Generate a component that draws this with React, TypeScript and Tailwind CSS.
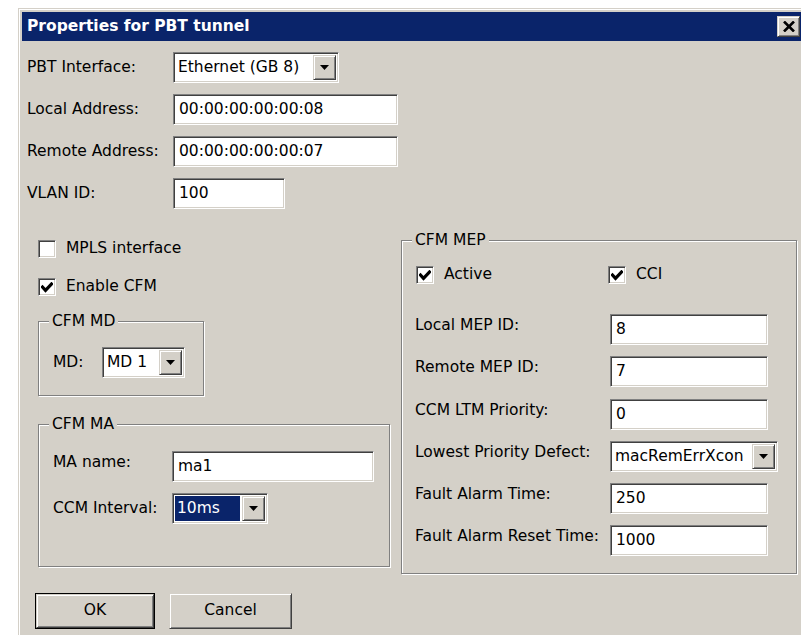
import type { ReactNode } from "react"

// classic 3D bevels
const sunken =
  "border border-t-[#808080] border-l-[#808080] border-b-white border-r-white shadow-[inset_1px_1px_0_#404040,inset_-1px_-1px_0_#d4d0c8] bg-white"
const raised =
  "border border-t-[#d4d0c8] border-l-[#d4d0c8] border-b-[#404040] border-r-[#404040] shadow-[inset_1px_1px_0_#fff,inset_-1px_-1px_0_#808080] bg-[#d4d0c8]"

function Arrow() {
  return (
    <svg width="9" height="5" viewBox="0 0 9 5">
      <polygon points="0,0 9,0 4.5,5" fill="#000" />
    </svg>
  )
}

function Field({ value, width }: { value: string; width: string }) {
  return (
    <div className={`${sunken} ${width} h-[31px] flex items-center pl-[5px]`}>
      {value}
    </div>
  )
}

function Combo({ value, width, selected }: { value: string; width: string; selected?: boolean }) {
  return (
    <div className={`${sunken} ${width} h-[31px] flex items-stretch p-[2px]`}>
      <span
        className={`flex-1 flex items-center pl-[2px] ${selected ? "bg-[#0a246a] text-white" : ""}`}
      >
        {value}
      </span>
      <span className={`${raised} w-[23px] ml-[2px] flex items-center justify-center`}>
        <Arrow />
      </span>
    </div>
  )
}

function Check({ label, checked }: { label: string; checked?: boolean }) {
  return (
    <div className="flex items-center gap-[10px] h-[18px]">
      <span className={`${sunken} w-[18px] h-[18px] flex items-center justify-center`}>
        {checked && (
          <svg width="12" height="11" viewBox="0 0 12 11">
            <path
              d="M1.5 5 L4.5 8.3 L10.5 2"
              stroke="#000"
              strokeWidth="3.2"
              strokeLinecap="square"
              fill="none"
            />
          </svg>
        )}
      </span>
      <span>{label}</span>
    </div>
  )
}

function Group({ title, className, children }: { title: string; className: string; children: ReactNode }) {
  return (
    <div
      className={`border border-[#808080] shadow-[inset_1px_1px_0_#fff,1px_1px_0_#fff] flex flex-col ${className}`}
    >
      <span className="-mt-[10px] ml-[10px] self-start bg-[#d4d0c8] px-[3px] leading-[18px]">{title}</span>
      {children}
    </div>
  )
}

function Button({ label, width, isDefault }: { label: string; width: string; isDefault?: boolean }) {
  return (
    <div className={`${width} h-[36px] ${isDefault ? "border border-black" : ""} flex`}>
      <div className={`${raised} flex-1 flex items-center justify-center`}>{label}</div>
    </div>
  )
}

export default function App() {
  const mepRows: { label: string; value: string; combo?: boolean }[] = [
    { label: "Local MEP ID:", value: "8" },
    { label: "Remote MEP ID:", value: "7" },
    { label: "CCM LTM Priority:", value: "0" },
    { label: "Lowest Priority Defect:", value: "macRemErrXcon", combo: true },
    { label: "Fault Alarm Time:", value: "250" },
    { label: "Fault Alarm Reset Time:", value: "1000" },
  ]

  return (
    <div
      className="relative w-[801px] h-[635px] overflow-hidden bg-white text-[15.5px] text-black"
      style={{ fontFamily: '"DejaVu Sans", Tahoma, sans-serif' }}
    >
      <div className="ml-[18px] mt-[8px] border-t border-l border-[#d4d0c8]">
        <div className="border-t border-l border-white bg-[#d4d0c8] pt-[2px] pl-[2px] h-[640px]">
          {/* title bar */}
          <div className="h-[29px] bg-[#0a246a] flex items-center justify-between pl-[5px]">
            <span className="text-white font-bold text-[15.5px]">Properties for PBT tunnel</span>
            <span className={`${raised} w-[23px] h-[21px] mr-[1px] flex items-center justify-center`}>
              <svg width="12" height="11" viewBox="0 0 12 11">
                <path d="M1 0.5 L11 10.5 M11 0.5 L1 10.5" stroke="#000" strokeWidth="2.6" />
              </svg>
            </span>
          </div>

          <div className="pl-[5px] pt-[11px]">
            {/* interface + addresses */}
            <div className="grid grid-cols-[146px_auto] gap-y-[11px] items-center">
              <span>PBT Interface:</span>
              <Combo value="Ethernet (GB 8)" width="w-[166px]" />
              <span>Local Address:</span>
              <Field value="00:00:00:00:00:08" width="w-[225px]" />
              <span>Remote Address:</span>
              <Field value="00:00:00:00:00:07" width="w-[225px]" />
              <span>VLAN ID:</span>
              <Field value="100" width="w-[112px]" />
            </div>

            <div className="flex mt-[31px]">
              {/* left column */}
              <div className="w-[374px] pl-[11px] flex flex-col">
                <Check label="MPLS interface" />
                <div className="mt-[20px]">
                  <Check label="Enable CFM" checked />
                </div>

                <Group title="CFM MD" className="mt-[25px] w-[166px] h-[75px]">
                  <div className="mt-[17px] pl-[14px] flex items-center">
                    <span className="w-[49px]">MD:</span>
                    <Combo value="MD 1" width="w-[83px]" />
                  </div>
                </Group>

                <Group title="CFM MA" className="mt-[28px] w-[352px] h-[143px]">
                  <div className="mt-[18px] pl-[14px] flex flex-col gap-[11px]">
                    <div className="flex items-center">
                      <span className="w-[119px] mb-[8px]">MA name:</span>
                      <Field value="ma1" width="w-[202px]" />
                    </div>
                    <div className="flex items-center">
                      <span className="w-[119px]">CCM Interval:</span>
                      <Combo value="10ms" width="w-[96px]" selected />
                    </div>
                  </div>
                </Group>
              </div>

              {/* MEP settings */}
              <Group title="CFM MEP" className="w-[396px] h-[334px]">
                <div className="mt-[17px] pl-[14px] flex">
                  <div className="w-[192px]">
                    <Check label="Active" checked />
                  </div>
                  <Check label="CCI" checked />
                </div>
                <div className="mt-[30px] pl-[13px] flex flex-col gap-[11px]">
                  {mepRows.map((row) => (
                    <div key={row.label} className="flex items-center">
                      <span className="w-[195px] mb-[8px]">{row.label}</span>
                      {row.combo ? (
                        <Combo value={row.value} width="w-[168px]" />
                      ) : (
                        <Field value={row.value} width="w-[158px]" />
                      )}
                    </div>
                  ))}
                </div>
              </Group>
            </div>

            <div className="flex gap-[14px] mt-[19px] pl-[8px]">
              <Button label="OK" width="w-[120px]" isDefault />
              <Button label="Cancel" width="w-[123px]" />
            </div>
          </div>
        </div>
      </div>
    </div>
  )
}
